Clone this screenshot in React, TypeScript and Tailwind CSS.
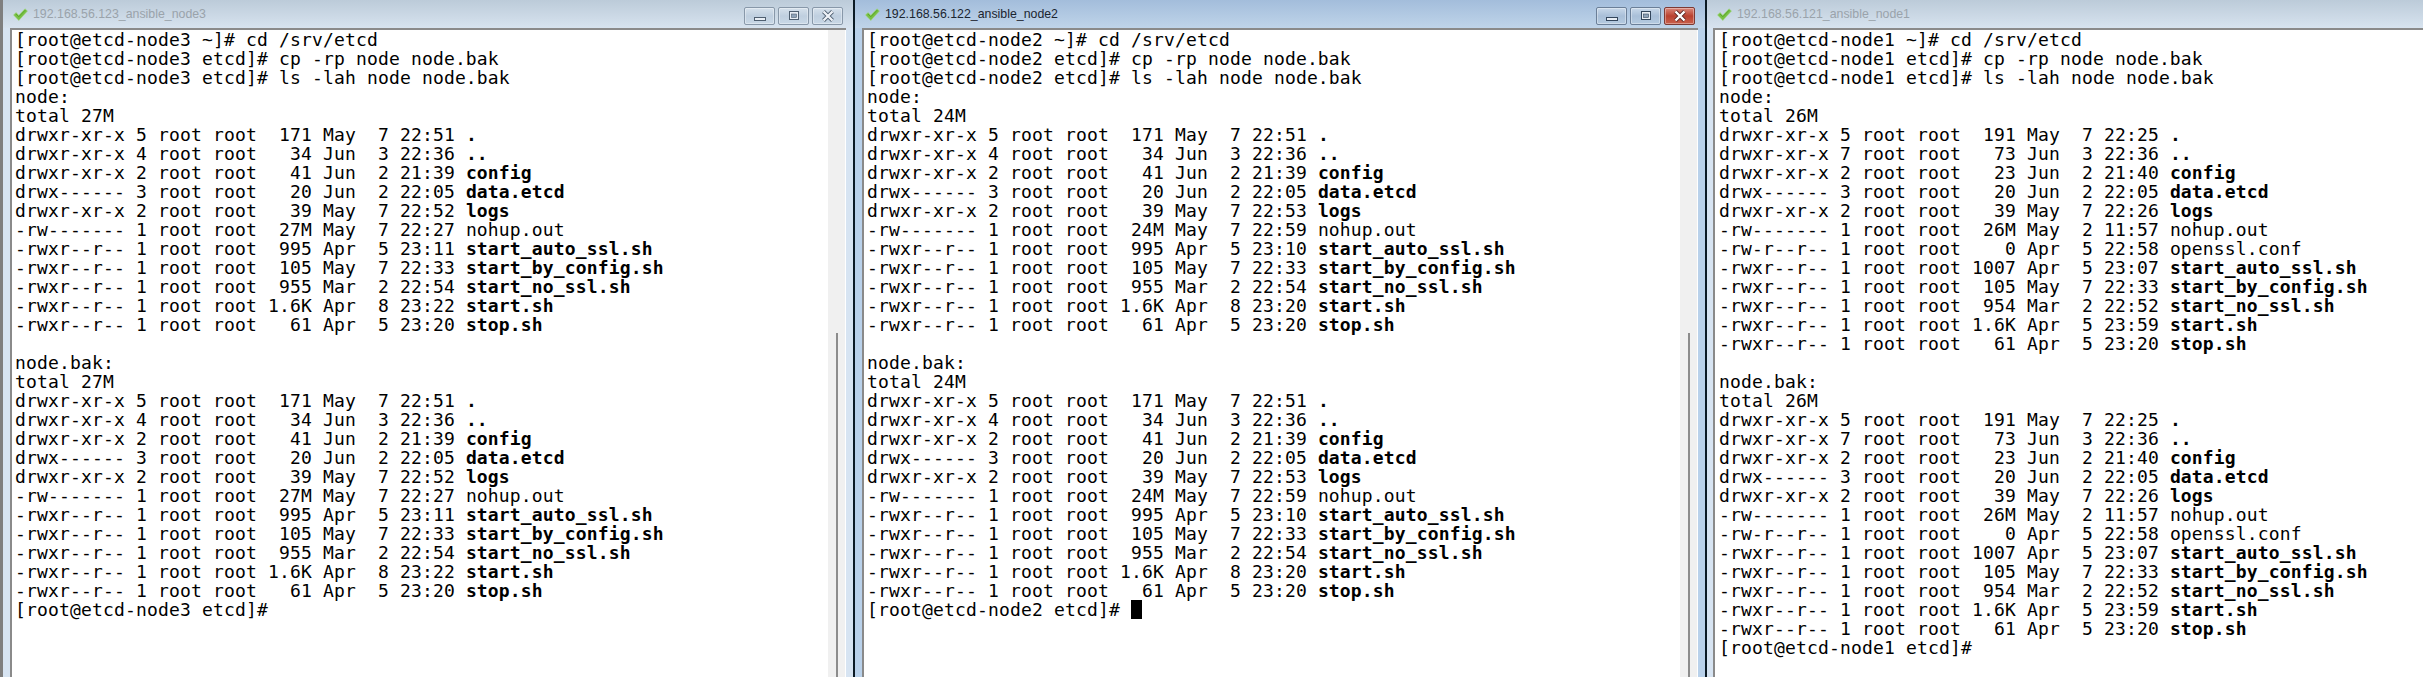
import React from "react";

type Row = [string, string, boolean];

const HEAD = (host: string) => [
  `[root@etcd-${host} ~]# cd /srv/etcd`,
  `[root@etcd-${host} etcd]# cp -rp node node.bak`,
  `[root@etcd-${host} etcd]# ls -lah node node.bak`,
];

const NODE3: Row[] = [
  ["drwxr-xr-x 5 root root  171 May  7 22:51 ", ".", true],
  ["drwxr-xr-x 4 root root   34 Jun  3 22:36 ", "..", true],
  ["drwxr-xr-x 2 root root   41 Jun  2 21:39 ", "config", true],
  ["drwx------ 3 root root   20 Jun  2 22:05 ", "data.etcd", true],
  ["drwxr-xr-x 2 root root   39 May  7 22:52 ", "logs", true],
  ["-rw------- 1 root root  27M May  7 22:27 ", "nohup.out", false],
  ["-rwxr--r-- 1 root root  995 Apr  5 23:11 ", "start_auto_ssl.sh", true],
  ["-rwxr--r-- 1 root root  105 May  7 22:33 ", "start_by_config.sh", true],
  ["-rwxr--r-- 1 root root  955 Mar  2 22:54 ", "start_no_ssl.sh", true],
  ["-rwxr--r-- 1 root root 1.6K Apr  8 23:22 ", "start.sh", true],
  ["-rwxr--r-- 1 root root   61 Apr  5 23:20 ", "stop.sh", true],
];

const NODE2: Row[] = [
  ["drwxr-xr-x 5 root root  171 May  7 22:51 ", ".", true],
  ["drwxr-xr-x 4 root root   34 Jun  3 22:36 ", "..", true],
  ["drwxr-xr-x 2 root root   41 Jun  2 21:39 ", "config", true],
  ["drwx------ 3 root root   20 Jun  2 22:05 ", "data.etcd", true],
  ["drwxr-xr-x 2 root root   39 May  7 22:53 ", "logs", true],
  ["-rw------- 1 root root  24M May  7 22:59 ", "nohup.out", false],
  ["-rwxr--r-- 1 root root  995 Apr  5 23:10 ", "start_auto_ssl.sh", true],
  ["-rwxr--r-- 1 root root  105 May  7 22:33 ", "start_by_config.sh", true],
  ["-rwxr--r-- 1 root root  955 Mar  2 22:54 ", "start_no_ssl.sh", true],
  ["-rwxr--r-- 1 root root 1.6K Apr  8 23:20 ", "start.sh", true],
  ["-rwxr--r-- 1 root root   61 Apr  5 23:20 ", "stop.sh", true],
];

const NODE1: Row[] = [
  ["drwxr-xr-x 5 root root  191 May  7 22:25 ", ".", true],
  ["drwxr-xr-x 7 root root   73 Jun  3 22:36 ", "..", true],
  ["drwxr-xr-x 2 root root   23 Jun  2 21:40 ", "config", true],
  ["drwx------ 3 root root   20 Jun  2 22:05 ", "data.etcd", true],
  ["drwxr-xr-x 2 root root   39 May  7 22:26 ", "logs", true],
  ["-rw------- 1 root root  26M May  2 11:57 ", "nohup.out", false],
  ["-rw-r--r-- 1 root root    0 Apr  5 22:58 ", "openssl.conf", false],
  ["-rwxr--r-- 1 root root 1007 Apr  5 23:07 ", "start_auto_ssl.sh", true],
  ["-rwxr--r-- 1 root root  105 May  7 22:33 ", "start_by_config.sh", true],
  ["-rwxr--r-- 1 root root  954 Mar  2 22:52 ", "start_no_ssl.sh", true],
  ["-rwxr--r-- 1 root root 1.6K Apr  5 23:59 ", "start.sh", true],
  ["-rwxr--r-- 1 root root   61 Apr  5 23:20 ", "stop.sh", true],
];

function Line({ children }: { children?: React.ReactNode }) {
  return <div className="h-[19px] whitespace-pre leading-[19px]">{children}</div>;
}

function Listing({ rows }: { rows: Row[] }) {
  return (
    <>
      {rows.map((r) => (
        <Line key={r[1]}>
          {r[0]}
          <span className={r[2] ? "font-bold" : ""}>{r[1]}</span>
        </Line>
      ))}
    </>
  );
}

function Terminal({ host, total, rows, cursor, pad }: { host: string; total: string; rows: Row[]; cursor?: boolean; pad: string }) {
  return (
    <div className={`min-w-0 flex-1 overflow-hidden bg-white font-['DejaVu_Sans_Mono',monospace] text-[18px] tracking-[0.16px] text-black ${pad}`}>
      {HEAD(host).map((l) => (
        <Line key={l}>{l}</Line>
      ))}
      <Line>node:</Line>
      <Line>total {total}</Line>
      <Listing rows={rows} />
      <Line />
      <Line>node.bak:</Line>
      <Line>total {total}</Line>
      <Listing rows={rows} />
      <Line>
        {`[root@etcd-${host} etcd]#`}
        {cursor && (
          <>
            {" "}
            <span className="inline-block h-[19px] w-[11px] bg-black align-top" />
          </>
        )}
      </Line>
    </div>
  );
}

function Check() {
  return (
    <svg width="15" height="13" viewBox="0 0 15 13" className="shrink-0">
      <path d="M0.5 7 L3 4.5 L5.8 7.2 L12 0.8 L14.5 3 L5.8 12.5 Z" fill="#78c043" stroke="#a5d88a" strokeWidth="0.6" />
      <path d="M3 6 L5.8 8.8 L12.2 2.2" fill="none" stroke="#5aa62f" strokeWidth="1" />
    </svg>
  );
}

function WinButton({ kind, active, danger }: { kind: "min" | "max" | "close"; active?: boolean; danger?: boolean }) {
  const shell = danger
    ? "border-[#7d3a34] bg-gradient-to-b from-[#d9877a] via-[#b9402f] to-[#c9604c]"
    : active
      ? "border-[#6b7f98] bg-gradient-to-b from-[#c9d9ea] via-[#a9bfd8] to-[#b5cbe0]"
      : "border-[#8898a9] bg-gradient-to-b from-[#d6e1ec] via-[#bfcfdf] to-[#c9d8e6]";
  const ink = active ? "#33465c" : "#4f5f70";
  return (
    <div className={`flex h-[18px] w-[31px] items-center justify-center rounded-[2px] border ${shell} shadow-[inset_0_0_0_1px_rgba(255,255,255,0.35)]`}>
      <svg width="16" height="12" viewBox="0 0 16 12">
        {kind === "min" && <rect x="2.5" y="7.5" width="11" height="3" fill="#e8eef5" stroke={ink} />}
        {kind === "max" && (
          <>
            <rect x="3.5" y="1.5" width="9" height="8" fill="#e8eef5" stroke={ink} />
            <rect x="5.5" y="4" width="5" height="3.5" fill="#8fa3b9" stroke={ink} strokeWidth="0.6" />
          </>
        )}
        {kind === "close" && (
          <>
            <path d="M3.5 1.5 L12.5 10.5 M12.5 1.5 L3.5 10.5" stroke={danger ? "#5a2a26" : ink} strokeWidth="4" />
            <path d="M3.5 1.5 L12.5 10.5 M12.5 1.5 L3.5 10.5" stroke={danger ? "#ffffff" : "#eef2f7"} strokeWidth="2.4" />
          </>
        )}
      </svg>
    </div>
  );
}

function Window({
  title,
  active,
  host,
  total,
  rows,
  cursor,
  className,
  controls,
  titleBar,
  pad,
}: {
  title: string;
  active?: boolean;
  host: string;
  total: string;
  rows: Row[];
  cursor?: boolean;
  className: string;
  controls?: boolean;
  titleBar: string;
  pad: string;
}) {
  const frame = active ? "bg-[#b9d1ea]" : "bg-[#d7e4f2]";
  return (
    <div className={`flex h-full flex-col ${frame} ${className}`}>
      <div
        className={`flex h-[28px] shrink-0 items-center bg-gradient-to-b ${
          active ? "from-[#a3bddb] to-[#bfd4e9] text-[#1b2530]" : "from-[#bccbd9] to-[#d7e3ef] text-[#9aa3ab]"
        } ${titleBar}`}
      >
        <Check />
        <span className="ml-[5px] font-['Liberation_Sans',sans-serif] text-[12.35px]">{title}</span>
        {controls && (
          <div className="mt-[3px] ml-auto flex gap-[3px] pr-[10px]">
            <WinButton kind="min" active={active} />
            <WinButton kind="max" active={active} />
            <WinButton kind="close" active={active} danger={active} />
          </div>
        )}
      </div>
      <div className="flex min-h-0 min-w-0 flex-1 border-t-2 border-l-2 border-[#8a8a8a]">
        <Terminal host={host} total={total} rows={rows} cursor={cursor} pad={pad} />
        {controls && (
          <div className="flex w-[17px] shrink-0 flex-col items-center bg-[#f0f0f0] pt-[303px]">
            <div className="w-[2px] flex-1 bg-[#8c8c8c]" />
          </div>
        )}
        {controls && <div className="w-px shrink-0 bg-white" />}
      </div>
    </div>
  );
}

function Divider() {
  return <div className="h-full w-[2px] shrink-0 bg-[#0b1a24]" />;
}

export default function App() {
  return (
    <div className="flex h-[677px] w-[2423px] overflow-hidden bg-white">
      <div className="h-full w-[3px] shrink-0 bg-[#7f7f7f]" />
      <Window
        title="192.168.56.123_ansible_node3"
        host="node3"
        total="27M"
        rows={NODE3}
        controls
        className="w-[850px] shrink-0 px-[7px]"
        titleBar="-mx-[7px] pl-[10px]"
        pad="pl-[3px]"
      />
      <Divider />
      <Window
        title="192.168.56.122_ansible_node2"
        active
        host="node2"
        total="24M"
        rows={NODE2}
        cursor
        controls
        className="w-[850px] shrink-0 px-[7px]"
        titleBar="-mx-[7px] pl-[10px]"
        pad="pl-[3px]"
      />
      <Divider />
      <Window
        title="192.168.56.121_ansible_node1"
        host="node1"
        total="26M"
        rows={NODE1}
        className="min-w-0 flex-1 pl-[6px]"
        titleBar="-ml-[6px] pl-[10px]"
        pad="pl-[4px]"
      />
    </div>
  );
}
